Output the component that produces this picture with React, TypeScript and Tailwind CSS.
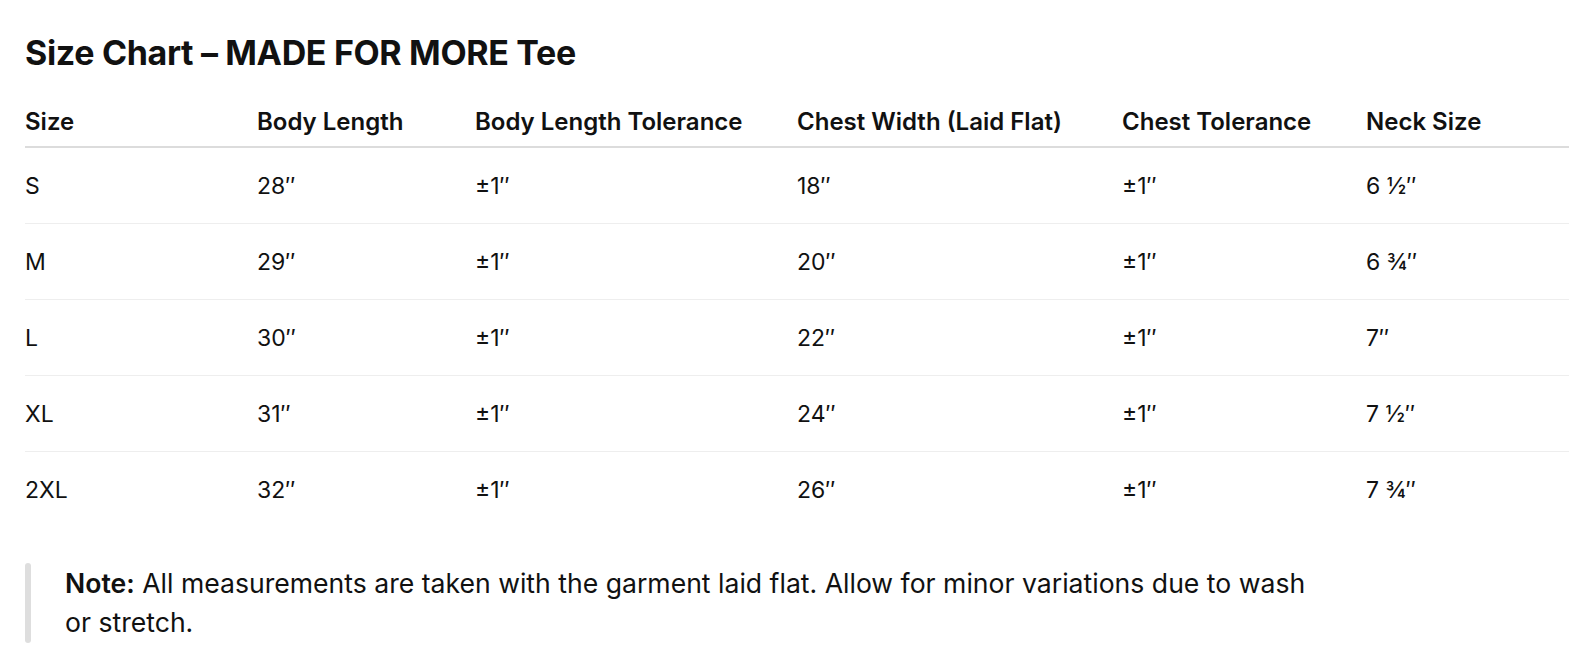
import React from "react";

const rows = [
  ["S", "28″", "±1″", "18″", "±1″", "6 ½″"],
  ["M", "29″", "±1″", "20″", "±1″", "6 ¾″"],
  ["L", "30″", "±1″", "22″", "±1″", "7″"],
  ["XL", "31″", "±1″", "24″", "±1″", "7 ½″"],
  ["2XL", "32″", "±1″", "26″", "±1″", "7 ¾″"],
];

const headers = [
  "Size",
  "Body Length",
  "Body Length Tolerance",
  "Chest Width (Laid Flat)",
  "Chest Tolerance",
  "Neck Size",
];

const widths = ["w-[232px]", "w-[218px]", "w-[322px]", "w-[325px]", "w-[244px]", "w-[203px]"];

export default function App() {
  return (
    <div className="min-h-screen bg-white px-[25px] pt-[33px] text-[#111] font-['Inter','Liberation_Sans',sans-serif]">
      <h2 className="text-[34px] font-bold leading-[40px] tracking-[-0.01em]">
        Size Chart – MADE FOR MORE Tee
      </h2>

      <table className="mt-[21px] w-[1544px] table-fixed border-collapse text-left">
        <colgroup>
          {widths.map((w, i) => (
            <col key={i} className={w} />
          ))}
        </colgroup>
        <thead>
          <tr className="border-b-2 border-[#dcdcdc]">
            {headers.map((h) => (
              <th key={h} className="h-[53px] pt-[3px] text-[24px] font-semibold">
                {h}
              </th>
            ))}
          </tr>
        </thead>
        <tbody>
          {rows.map((r, i) => (
            <tr key={r[0]} className={i < rows.length - 1 ? "border-b border-[#eeeeee]" : ""}>
              {r.map((c, j) => (
                <td key={j} className="h-[76px] pt-[2px] text-[23px] font-normal">
                  {c}
                </td>
              ))}
            </tr>
          ))}
        </tbody>
      </table>

      <blockquote className="mt-[36px] flex gap-[34px]">
        <div className="w-[6px] shrink-0 rounded-full bg-[#dedede]" />
        <p className="max-w-[1268px] py-[1px] text-[26.6px] leading-[39px]">
          <strong className="font-semibold">Note:</strong> All measurements are taken with the garment
          laid flat. Allow for minor variations due to wash or stretch.
        </p>
      </blockquote>
    </div>
  );
}
